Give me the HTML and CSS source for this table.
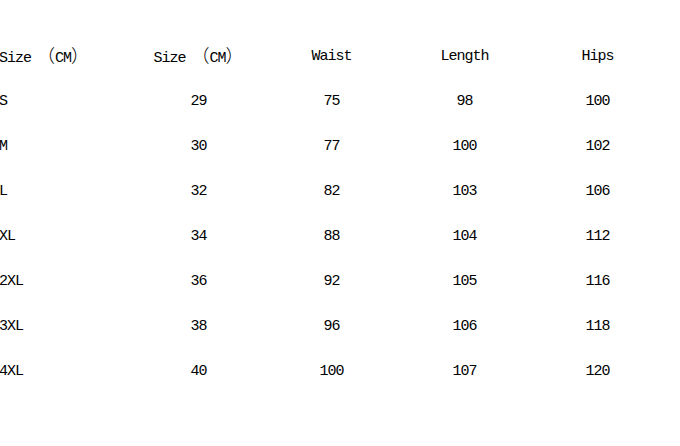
FILE: index.html
```html
<!DOCTYPE html>
<html>
<head>
<meta charset="utf-8">
<link rel="stylesheet" href="styles.css">
</head>
<body>
<div class="table">
  <div class="row"><div class="cell first">Size<span class="fw open">（</span>CM<span class="fw close">）</span></div><div class="cell">Size<span class="fw open">（</span>CM<span class="fw close">）</span></div><div class="cell">Waist</div><div class="cell">Length</div><div class="cell">Hips</div></div>
  <div class="row"><div class="cell first">S</div><div class="cell">29</div><div class="cell">75</div><div class="cell">98</div><div class="cell">100</div></div>
  <div class="row"><div class="cell first">M</div><div class="cell">30</div><div class="cell">77</div><div class="cell">100</div><div class="cell">102</div></div>
  <div class="row"><div class="cell first">L</div><div class="cell">32</div><div class="cell">82</div><div class="cell">103</div><div class="cell">106</div></div>
  <div class="row"><div class="cell first">XL</div><div class="cell">34</div><div class="cell">88</div><div class="cell">104</div><div class="cell">112</div></div>
  <div class="row"><div class="cell first">2XL</div><div class="cell">36</div><div class="cell">92</div><div class="cell">105</div><div class="cell">116</div></div>
  <div class="row"><div class="cell first">3XL</div><div class="cell">38</div><div class="cell">96</div><div class="cell">106</div><div class="cell">118</div></div>
  <div class="row"><div class="cell first">4XL</div><div class="cell">40</div><div class="cell">100</div><div class="cell">107</div><div class="cell">120</div></div>
</div>
</body>
</html>
```

FILE: styles.css
```css
html, body {
  margin: 0;
  padding: 0;
  background: #ffffff;
}
body {
  width: 680px;
  height: 446px;
  overflow: hidden;
}
.table {
  padding-top: 34px;
  margin-left: -1px;
  display: flex;
  flex-direction: column;
  font-family: "Liberation Mono", "Noto Sans CJK SC", monospace;
  font-size: 15px;
  letter-spacing: -1px;
  color: #000000;
}
.row {
  display: grid;
  grid-template-columns: repeat(5, 133px);
  height: 45px;
  align-items: center;
}
.cell {
  text-align: center;
  white-space: nowrap;
  line-height: 16px;
}
.cell.first {
  text-align: left;
}
.fw {
  display: inline-block;
  font-family: "Noto Sans CJK SC", sans-serif;
  font-size: 18px;
  line-height: 16px;
  font-weight: 300;
  letter-spacing: 0;
}
.fw.open {
  width: 24px;
  text-align: right;
}
.fw.close {
  width: 18px;
  text-align: left;
}
```
